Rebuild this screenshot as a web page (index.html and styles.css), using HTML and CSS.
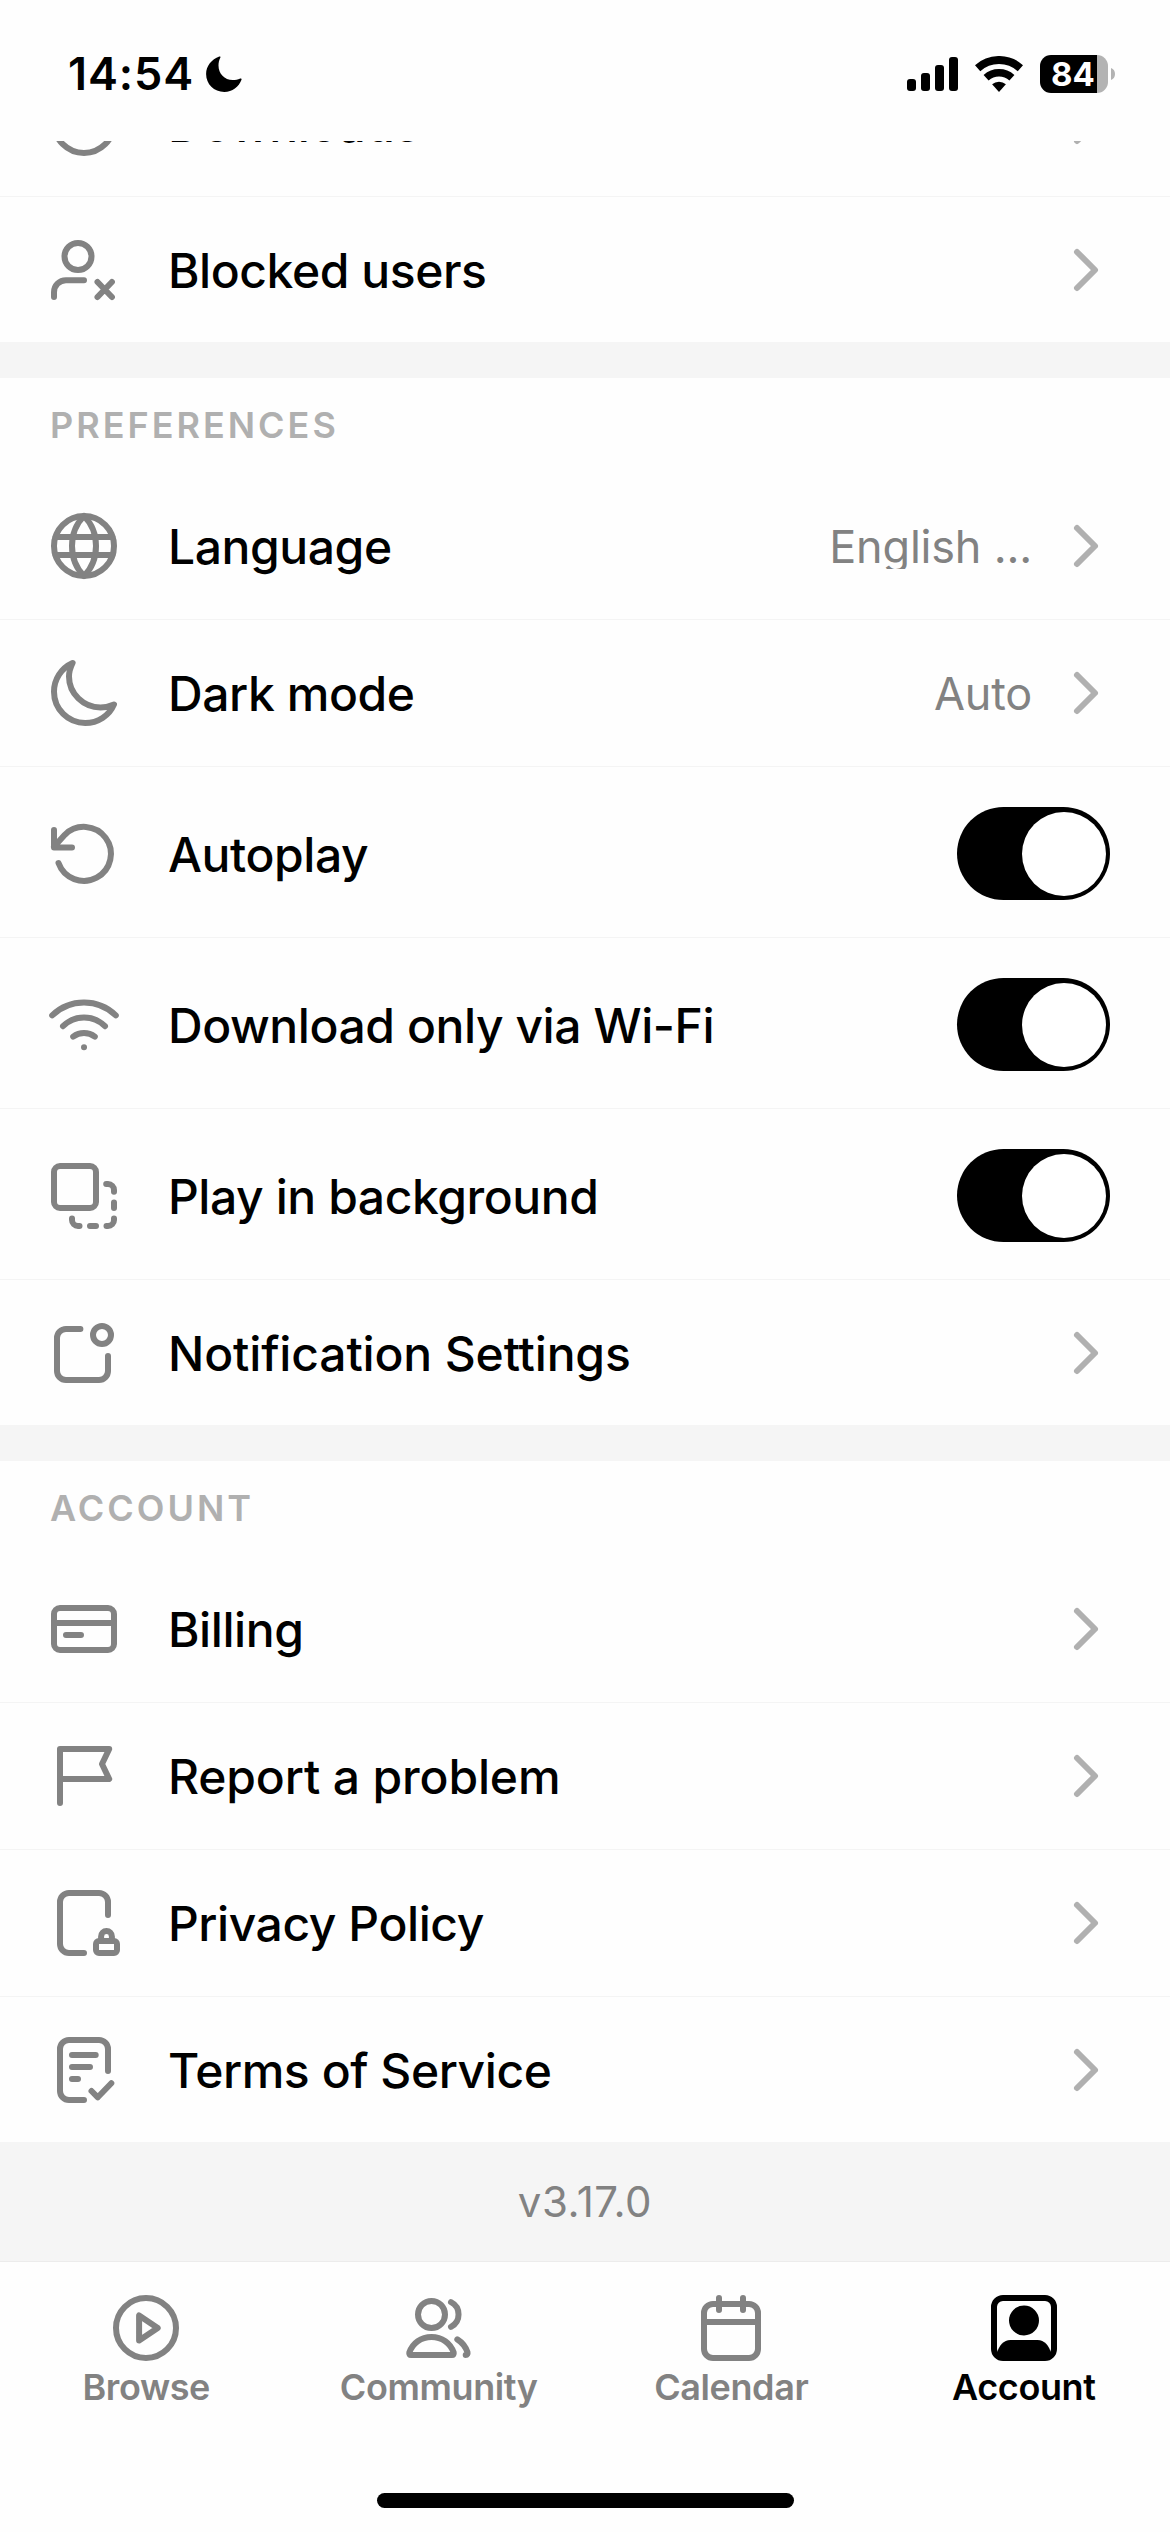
FILE: index.html
```html
<!DOCTYPE html>
<html lang="en">
<head>
<meta charset="utf-8">
<title>Account settings</title>
<link rel="stylesheet" href="styles.css">
</head>
<body>
<svg class="defs" aria-hidden="true"><symbol id="chevron" viewBox="0 0 24 24"><path d="M9 6l6 6-6 6"/></symbol></svg>
<div class="screen">
  <header class="status">
    <span class="time">14:54</span>
    <svg class="focus" viewBox="0 0 36 36"><path d="M13.3.6C14 .2 14.8.8 14.4 1.6 13 4.300 12.500 7 12.500 9.500c0 8.300 6 14.500 14.300 14.500 2.700 0 5-.5 7.400-1.500.9-.4 1.700.3 1.300 1.200C32.800 31 26.300 35.900 18.300 35.900 8 35.900.1 28.200.1 18 .1 10.200 5.600 3.300 13.300.6z"/></svg>
    <div class="indicators">
      <svg class="signal" viewBox="0 0 51 34"><rect y="22" width="9" height="12" rx="3"/><rect x="14" y="16" width="9" height="18" rx="3"/><rect x="28" y="8" width="9" height="26" rx="3"/><rect x="42" width="9" height="34" rx="3"/></svg>
      <svg class="wifi" viewBox="0 0 48 36"><path class="arc" stroke-width="8" d="M2.600 12.200a32 32 0 0 1 42.800 0"/><path class="arc" stroke-width="7.500" d="M11.100 21.700a19.300 19.300 0 0 1 25.800 0"/><path d="M24 36l-6.900-7.700a10.300 10.300 0 0 1 13.800 0z"/></svg>
      <div class="battery"><span class="level">84</span></div>
      <svg class="nub" viewBox="0 0 4 12"><path d="M0 0c2.600 1 4 3.300 4 6s-1.400 5-4 6z"/></svg>
    </div>
  </header>

  <main class="content">
    <section class="group">
      <div class="row first">
        <svg class="icon" viewBox="0 0 24 24"><circle cx="12" cy="12" r="10"/><path d="M12 7.500v8M8.500 12.500l3.500 3.500 3.500-3.500"/></svg>
        <span class="label">Downloads</span>
        <svg class="chevron"><use href="#chevron"/></svg>
      </div>
      <div class="row">
        <svg class="icon" viewBox="0 0 24 24"><circle cx="10" cy="7.500" r="4.500"/><path d="M2 21v-1.600a4 4 0 0 1 4-4h6M16.500 16l4.800 5M21.300 16l-4.800 5"/></svg>
        <span class="label">Blocked users</span>
        <svg class="chevron"><use href="#chevron"/></svg>
      </div>
    </section>

    <section class="group">
      <h2 class="heading">PREFERENCES</h2>
      <div class="row">
        <svg class="icon" viewBox="0 0 24 24"><circle cx="12" cy="12" r="10"/><path d="M2.500 9h19M2.500 15h19M12 2c2.600 2.600 4 6.200 4 10s-1.400 7.400-4 10c-2.600-2.600-4-6.200-4-10s1.400-7.400 4-10z"/></svg>
        <span class="label">Language</span><span class="value">English ...</span>
        <svg class="chevron"><use href="#chevron"/></svg>
      </div>
      <div class="row">
        <svg class="icon" viewBox="0 0 24 24"><path d="M8.200 2A10.500 10.500 0 0 0 2 11.600C2 17.400 6.700 22 12.400 22c4.200 0 8-2.400 9.600-6.200-1.400.6-3 1-4.500 1C11.800 16.800 7 12.200 7 6.500 7 4.900 7.500 3.400 8.200 2z"/></svg>
        <span class="label">Dark mode</span><span class="value">Auto</span>
        <svg class="chevron"><use href="#chevron"/></svg>
      </div>
      <div class="row tall">
        <svg class="icon" viewBox="0 0 24 24"><path d="M2 4v5.800h6M3.500 15a9 9 0 1 0 2.100-9.400L2 9.600"/></svg>
        <span class="label">Autoplay</span><span class="switch"></span>
      </div>
      <div class="row tall">
        <svg class="icon" viewBox="0 0 24 24"><path d="M1.400 8.800a15.300 15.300 0 0 1 21.200 0M5 12.400a10 10 0 0 1 14 0M8.400 15.900a6 6 0 0 1 7.200 0M12 19.400h.01"/></svg>
        <span class="label">Download only via Wi-Fi</span><span class="switch"></span>
      </div>
      <div class="row tall">
        <svg class="icon" viewBox="0 0 24 24"><rect x="2" y="2" width="14" height="14" rx="2"/><path d="M19.400 8h.6a2 2 0 0 1 2 2v.6M22 14.200v1.800M22 19.500v.5a2 2 0 0 1-2 2h-.5M16 22h-2M10.500 22H10a2 2 0 0 1-2-2v-.5"/></svg>
        <span class="label">Play in background</span><span class="switch"></span>
      </div>
      <div class="row">
        <svg class="icon" viewBox="0 0 24 24"><circle cx="18" cy="6" r="3"/><path d="M10.800 4H6a3 3 0 0 0-3 3v11a3 3 0 0 0 3 3h11a3 3 0 0 0 3-3v-5"/></svg>
        <span class="label loose">Notification Settings</span>
        <svg class="chevron"><use href="#chevron"/></svg>
      </div>
    </section>

    <section class="group">
      <h2 class="heading">ACCOUNT</h2>
      <div class="row">
        <svg class="icon" viewBox="0 0 24 24"><rect x="2" y="5" width="20" height="14" rx="2"/><path d="M2 10h20M6 14h5"/></svg>
        <span class="label">Billing</span>
        <svg class="chevron"><use href="#chevron"/></svg>
      </div>
      <div class="row">
        <svg class="icon" viewBox="0 0 24 24"><path d="M4 21V3h16.400L18 8l2.400 5H4"/></svg>
        <span class="label loose">Report a problem</span>
        <svg class="chevron"><use href="#chevron"/></svg>
      </div>
      <div class="row">
        <svg class="icon" viewBox="0 0 24 24"><path d="M20 9.300V5a3 3 0 0 0-3-3H7a3 3 0 0 0-3 3v14a3 3 0 0 0 3 3h5M17.700 18v-1.500a1.800 1.800 0 0 1 3.600 0V18"/><rect x="16" y="18" width="7" height="4" rx="1"/></svg>
        <span class="label">Privacy Policy</span>
        <svg class="chevron"><use href="#chevron"/></svg>
      </div>
      <div class="row">
        <svg class="icon" viewBox="0 0 24 24"><path d="M20 12.300V5a3 3 0 0 0-3-3H7a3 3 0 0 0-3 3v14a3 3 0 0 0 3 3h5M8 7h7.900M8 11h6M8 15h2M14.500 19l2.100 2.100 4.500-4.700"/></svg>
        <span class="label">Terms of Service</span>
        <svg class="chevron"><use href="#chevron"/></svg>
      </div>
    </section>
    <p class="version">v3.17.0</p>
  </main>

  <nav class="tabs">
    <a class="tab">
      <svg class="icon" viewBox="0 0 24 24"><circle cx="12" cy="12" r="10"/><path d="M9.700 7.800v8.400l6.200-4.200z"/></svg>
      <span>Browse</span>
    </a>
    <a class="tab">
      <svg class="icon" viewBox="0 0 24 24"><circle cx="9.500" cy="7.500" r="4.500"/><path d="M16 3.400a4.600 4.600 0 0 1 0 8.200M2.100 20.200C3.200 17 6 15 9.500 15s6.300 2 7.400 5.200c.1.500-.1.800-.6.800H2.700c-.5 0-.7-.3-.6-.8zM18.100 15.800c1.600 1 2.800 2.500 3.400 4.300.1.500-.1.900-.6.900"/></svg>
      <span>Community</span>
    </a>
    <a class="tab">
      <svg class="icon" viewBox="0 0 24 24"><rect x="3" y="4" width="18" height="18" rx="3"/><path d="M3 10h18M8 2v4M16 2v4"/></svg>
      <span>Calendar</span>
    </a>
    <a class="tab active">
      <svg class="icon" viewBox="0 0 24 24"><rect x="2" y="2" width="20" height="20" rx="3"/><circle class="solid" cx="12" cy="9.500" r="5"/><path class="solid" d="M3 20.500C3.600 17.800 5.200 16 7.500 16h9c2.300 0 3.900 1.800 4.500 4.500L20 22H4z"/></svg>
      <span>Account</span>
    </a>
  </nav>
  <div class="home"></div>
</div>
</body>
</html>
```
FILE: styles.css
```css
* {
  box-sizing: border-box;
}

body {
  margin: 0;
  background: #fff;
  font-family: Inter, "Liberation Sans", sans-serif;
  color: #000;
}

.defs {
  display: none;
}

.screen {
  display: flex;
  flex-direction: column;
  width: 1170px;
  height: 2532px;
  overflow: hidden;
  background: #fefefe;
}

/* Status bar */
.status {
  display: flex;
  flex: none;
  align-items: center;
  height: 141px;
  padding: 7px 55px 0 68px;
  background: #fefefe;
}

.time {
  width: 138px;
  font-size: 45px;
  font-weight: 600;
  letter-spacing: 0.9px;
  line-height: 48px;
  white-space: nowrap;
}

.focus {
  width: 36px;
  height: 36px;
}

.indicators {
  display: flex;
  align-items: center;
  margin-left: auto;
}

.signal {
  width: 51px;
  height: 34px;
}

.wifi {
  width: 48px;
  height: 36px;
  margin: 0 17px;
}

.wifi .arc {
  fill: none;
  stroke: #000;
}

.battery {
  width: 68px;
  height: 38px;
  border-radius: 11px;
  background: linear-gradient(90deg, #000 57px, #b3b3b3 57px);
}

.level {
  display: block;
  padding-left: 11px;
  color: #fff;
  font-size: 33px;
  font-weight: 700;
  line-height: 38px;
}

.nub {
  width: 4px;
  height: 12px;
  margin-left: 3px;
  fill: #b3b3b3;
}

/* Scrolled list, cut off under the status bar */
.content {
  display: flex;
  flex: none;
  flex-direction: column;
  justify-content: flex-end;
  height: 2121px;
  overflow: hidden;
}

.group {
  flex: none;
}

.group + .group {
  border-top: 36px solid #f5f5f5;
}

.heading {
  height: 96px;
  margin: 0;
  padding-left: 50px;
  color: #b0b0b0;
  font-size: 36px;
  font-weight: 600;
  letter-spacing: 3px;
  line-height: 94px;
}

.row {
  display: flex;
  align-items: center;
  height: 144px;
  padding: 0 48px;
}

.row + .row {
  height: 147px;
  padding-top: 3px;
  background: linear-gradient(#fefefe 1px, #f4f4f4 1px, #f4f4f4 2px, #fefefe 2px);
}

.row.tall {
  height: 171px;
  padding-top: 6px;
}

.icon {
  flex: none;
  width: 72px;
  height: 72px;
  fill: none;
  stroke: #828282;
  stroke-width: 2;
  stroke-linecap: round;
  stroke-linejoin: round;
}

.label {
  flex: 1;
  margin-left: 48px;
  padding-top: 2px;
  font-size: 48px;
  font-weight: 500;
  letter-spacing: -0.43px;
  line-height: 58px;
  white-space: nowrap;
}

.label.loose {
  letter-spacing: -0.15px;
}

.first .label {
  padding-top: 4px;
}

.value {
  height: 45px;
  overflow: hidden;
  color: #828282;
  font-size: 45px;
  letter-spacing: -0.2px;
  line-height: 45px;
  white-space: nowrap;
}

.chevron {
  flex: none;
  width: 72px;
  height: 72px;
  margin-left: 18px;
  fill: none;
  stroke: #b0b0b0;
  stroke-width: 2;
  stroke-linecap: round;
  stroke-linejoin: round;
}

.switch {
  display: flex;
  justify-content: flex-end;
  width: 153px;
  height: 93px;
  margin-right: 12px;
  padding: 4.5px;
  border-radius: 47px;
  background: #000;
}

.switch::before {
  content: "";
  width: 84px;
  height: 84px;
  border-radius: 50%;
  background: #fff;
}

.version {
  flex: none;
  height: 120px;
  margin: 0;
  border-bottom: 1px solid #ececec;
  background: #f5f5f5;
  color: #828282;
  font-size: 42px;
  letter-spacing: 0.6px;
  line-height: 120px;
  text-align: center;
}

/* Tab bar */
.tabs {
  display: grid;
  flex: none;
  grid-template-columns: repeat(4, 1fr);
  height: 231px;
  padding-top: 30px;
}

.tab {
  display: flex;
  flex-direction: column;
  align-items: center;
  color: #828282;
  font-size: 36px;
  font-weight: 600;
  letter-spacing: -0.4px;
  line-height: 46px;
}

.tab.active {
  color: #000;
}

.tab .icon {
  stroke: currentColor;
}

.tab .solid {
  fill: currentColor;
  stroke: none;
}

.home {
  flex: none;
  align-self: center;
  width: 417px;
  height: 15px;
  border-radius: 8px;
  background: #000;
}
```
